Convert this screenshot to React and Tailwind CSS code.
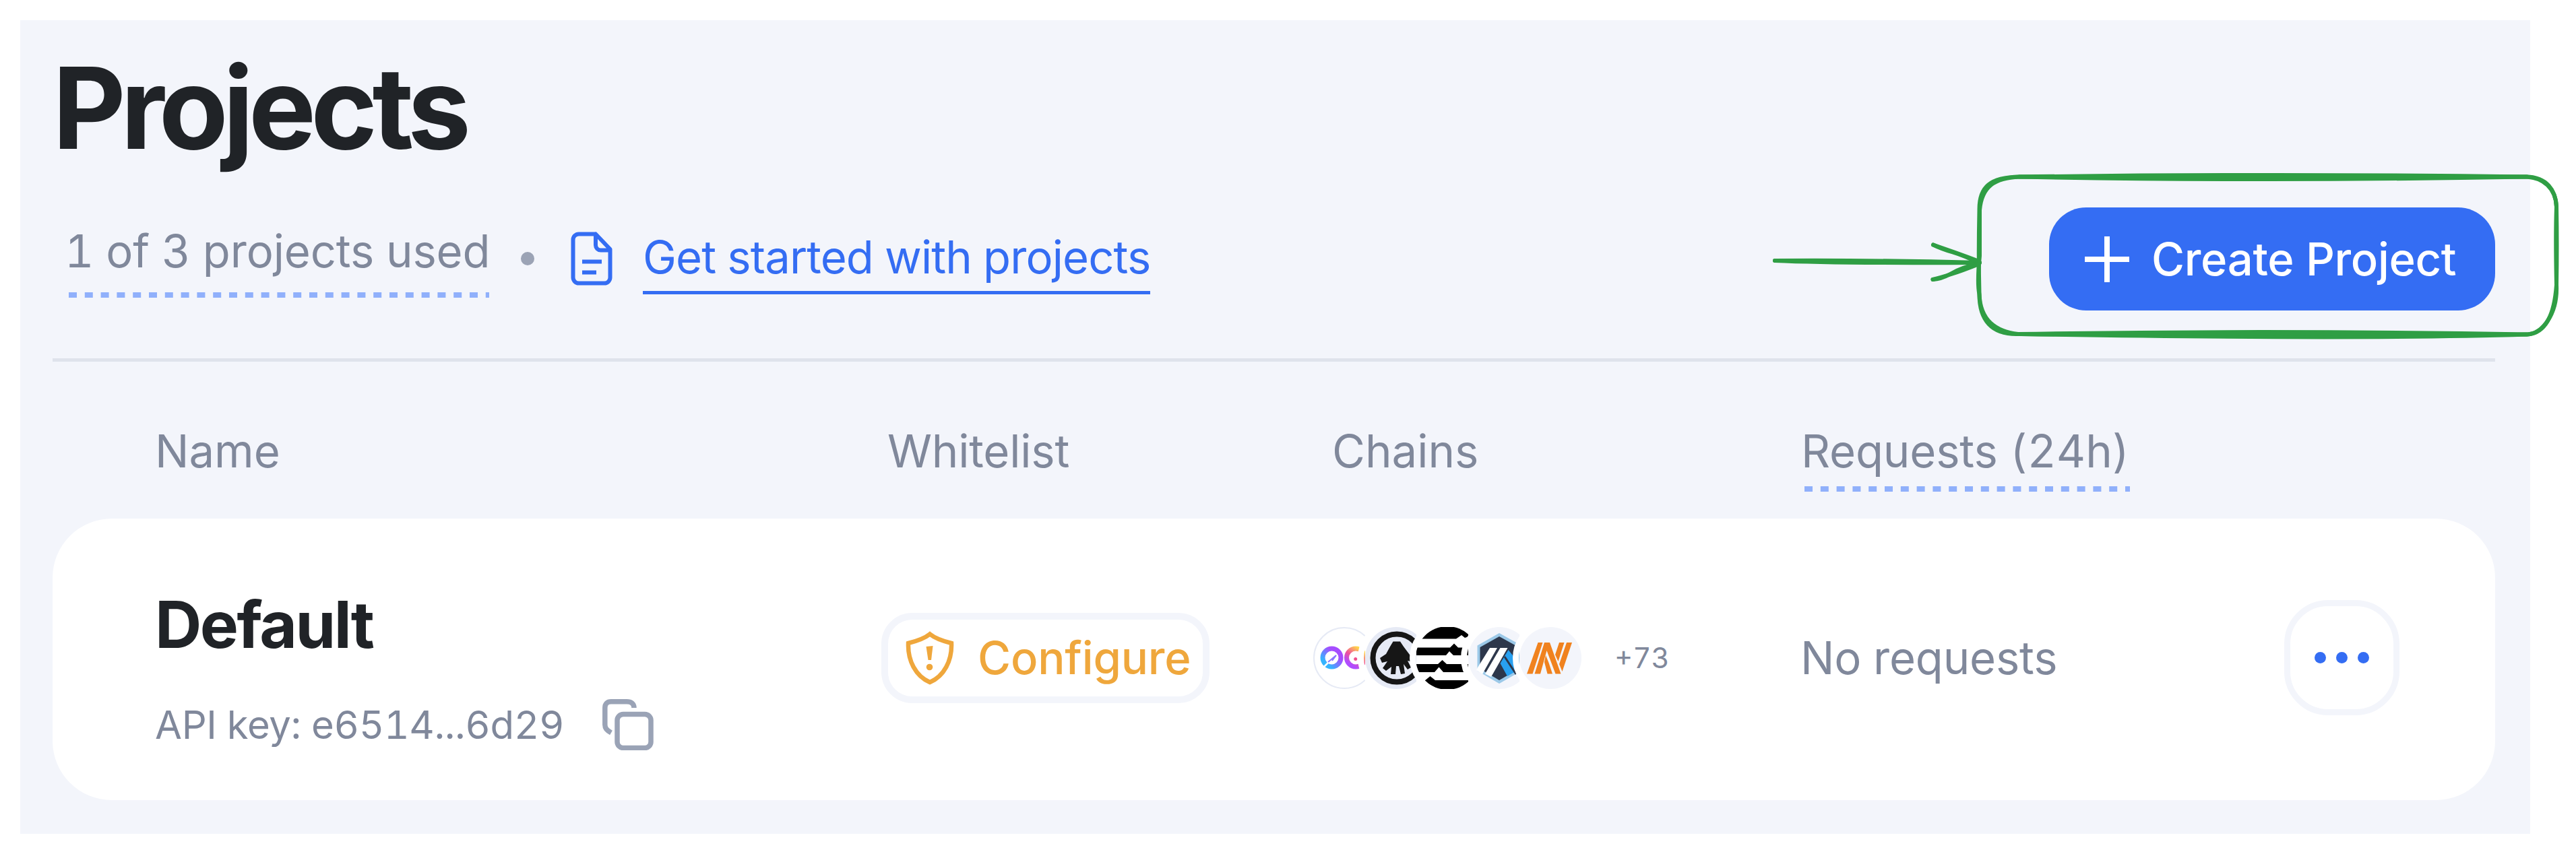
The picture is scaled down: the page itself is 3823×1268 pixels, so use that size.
import React from "react";

function DashLine() {
  return (
    <svg className="block w-full" height="8">
      <line x1="0" y1="4" x2="100%" y2="4" stroke="#90b0fb" strokeWidth="8" strokeDasharray="12 11.8" />
    </svg>
  );
}

function DocIcon() {
  return (
    <svg className="block" width="62" height="80" viewBox="0 0 62 80" fill="none" stroke="#346df3" strokeWidth="6" strokeLinejoin="round">
      <path d="M37 3.500H12A8.500 8.500 0 0 0 3.500 12V68A8.500 8.500 0 0 0 12 76.500H50A8.500 8.500 0 0 0 58.500 68V26L37 3.500V20a7.500 7.500 0 0 0 7.500 7.500H58" />
      <path d="M17 44.500H46M17 60.500H38" />
    </svg>
  );
}

function CopyIcon() {
  return (
    <svg className="block" width="76" height="76" viewBox="0 0 76 76" fill="none" stroke="#9aa3b6" strokeWidth="7.500">
      <rect x="22" y="22.500" width="50" height="50" rx="9" />
      <path d="M13 50C6 46 3.800 43 3.800 38V13C3.800 7 7 3.800 13 3.800H36C43 3.800 47 7 47 13" />
    </svg>
  );
}

function ShieldIcon() {
  return (
    <svg className="block" width="72" height="80" viewBox="0 0 72 80" fill="none">
      <path d="M36 4.500C28 11 16 15 4 18C3 44 15 67 36 76C57 67 69 44 68 18C56 15 44 11 36 4.500Z" stroke="#efa73c" strokeWidth="6.500" />
      <path d="M30.500 23L40.500 22L38 43H33.500Z" fill="#efa73c" />
      <circle cx="35.500" cy="53.500" r="4.800" fill="#efa73c" />
    </svg>
  );
}

function PlusIcon() {
  return (
    <svg className="block" width="66" height="68" viewBox="0 0 66 68" stroke="#fff" strokeWidth="8">
      <path d="M0 34H66M33 0V68" />
    </svg>
  );
}

/* One chain badge; all but the last are cut on the right by the ring of the next one. */
function Badge({ last, children }) {
  return (
    <svg className="block shrink-0" width={last ? 92 : 76.5} height="92" viewBox={last ? "0 0 92 92" : "0 0 76.5 92"}>
      {children}
      {last ? null : <circle cx="122.500" cy="46" r="52" fill="none" stroke="#fff" strokeWidth="9" />}
    </svg>
  );
}

function Chains() {
  return (
    <div className="flex">
      <Badge>
        <defs>
          <linearGradient id="ringA" x1="0" y1="1" x2="1" y2="0">
            <stop offset="0.200" stopColor="#35b4ff" />
            <stop offset="0.700" stopColor="#a64dff" />
          </linearGradient>
          <linearGradient id="ringB" x1="0" y1="1" x2="0.700" y2="0">
            <stop offset="0.200" stopColor="#b04dff" />
            <stop offset="0.550" stopColor="#f0509c" />
            <stop offset="1" stopColor="#ffd54a" />
          </linearGradient>
        </defs>
        <circle cx="46" cy="46" r="45" fill="#fff" stroke="#e6eaf5" strokeWidth="2" />
        <circle cx="27.500" cy="45.500" r="13.500" fill="none" stroke="url(#ringA)" strokeWidth="7" />
        <path d="M14 61L24 51" stroke="#fff" strokeWidth="2.500" />
        <path d="M22 52L34 42L28 50" fill="none" stroke="#8a74ff" strokeWidth="2" />
        <circle cx="63" cy="45.500" r="13.500" fill="none" stroke="url(#ringB)" strokeWidth="7" />
        <circle cx="62.700" cy="47.500" r="2.500" fill="#f0508c" />
      </Badge>
      <Badge>
        <circle cx="46" cy="46" r="46" fill="#e6eaf5" />
        <circle cx="47" cy="46" r="35.500" fill="none" stroke="#161616" strokeWidth="8" />
        <path
          d="M41.500 21.500H52L57 29L66 41L71 47L67 51L63 50L68 60L63 63L57 55L59 69L53 70L50 58H46L45 70L38 70L39 59L31 65L26 61L33 51L25 53L22 46L31 40L37 29Z"
          fill="#161616"
        />
      </Badge>
      <Badge>
        <circle cx="46" cy="46" r="47" fill="#000" />
        <path d="M0 17.500H59L67 12L72 16L78 14V30.500H62L56 24.500L50 30.500H0Z" fill="#fff" />
        <path d="M0 42H44L49 36L55 42H78V55H45L38.500 49L32 55H0Z" fill="#fff" />
        <path d="M0 67H27L33.500 59.500L40 67H78V79H28L20.500 73L12 80H0Z" fill="#fff" />
      </Badge>
      <Badge>
        <circle cx="46" cy="46" r="46" fill="#f3f5fb" />
        <path d="M46 9L79 27.500V65L46 84L13.500 65V27.500Z" fill="#9cc9e8" />
        <path d="M46 14L75 30V62L46 79L17.500 62V30Z" fill="#2d374b" />
        <path d="M59.500 34L66 42L78 62L70 66L58 73L47.500 54Z" fill="#28a0f0" />
        <path d="M54 44L71 70" stroke="#2d374b" strokeWidth="3" />
        <path d="M32 31H43L21 70L12 64L14 60Z" fill="#fff" />
        <path d="M47.500 31H58.500L34 74L25 69.500Z" fill="#fff" />
      </Badge>
      <Badge last>
        <circle cx="46" cy="46" r="46" fill="#f3f5fb" />
        <g fill="#f0821e">
          <path d="M27.500 23H34.500L19.500 69.500H11Z" />
          <path d="M37 23H45L61.500 69.500H53.500L40.500 35L31 69.500H22.500Z" />
          <path d="M39 42L43.500 53L49 69.500H41.500L37 52Z" />
          <path d="M59 23H66.500L57.500 51L53 41Z" />
          <path d="M70 23H78L63.500 66L59 55Z" />
        </g>
      </Badge>
    </div>
  );
}

function Annotation() {
  return (
    <svg
      className="pointer-events-none absolute top-[240px] left-[2620px]"
      width="1203"
      height="280"
      viewBox="2620 240 1203 280"
      fill="none"
      stroke="#2f9e44"
      strokeWidth="6"
      strokeLinecap="round"
      strokeLinejoin="round"
    >
      <path d="M2634 387Q2780 386 2938 390" />
      <path d="M2634 387Q2720 391 2938 390" />
      <path d="M2869 363.500Q2880 369 2898 374.500T2937 390.500" />
      <path d="M2869 363.500Q2885 369 2902 375T2937 388" />
      <path d="M2868.500 415Q2880 415 2896 406T2937 391" />
      <path d="M2868.500 415Q2880 412 2896 407T2937 392" />
      <path d="M2997 262.500H3750C3779 263 3793 282 3794 307Q3792.500 350 3794 423C3791 466 3778 494 3752 496.500Q3400 499 2995 496C2956 497 2937 476 2937.500 435Q2936 380 2937.500 312C2937 277 2954 263 2997 262.500Z" />
      <path d="M2997 262.500Q3380 257.500 3750 262.500C3774 264 3793 279 3794 307Q3795 365 3794 423C3796 466 3773 496 3750 496.500Q3370 490 2995 496C2962 492 2939 476 2937.500 437Q2934 420 2938 380V312C2941 277 2960 264 2997 262.500Z" />
      <path d="M2997 262.500Q3360 269.500 3750 262.500" />
      <path d="M3000 496Q3500 504.500 3750 496.500" />
      <path d="M3080 262.500H3640M3100 495.500Q3400 496 3690 496" />
    </svg>
  );
}

export default function App() {
  return (
    <div className="relative h-[1268px] w-[3823px] overflow-hidden bg-white p-[30px] font-['Inter',sans-serif] text-[67px] leading-[80px] whitespace-nowrap text-[#80889b] tabular-nums">
      <main className="flex h-[1208px] w-[3725px] flex-col bg-[#f3f5fb] pr-[52px] pl-[48px]">
        <h1 className="pt-[28px] text-[168px] leading-[204px] font-bold tracking-[-7.7px] text-[#202327]">Projects</h1>

        <header className="flex h-[275px] items-start border-b-[5px] border-[#dfe3ec]">
          <div className="mt-[71px] ml-6 w-[624px]">
            <div className="-ml-[6px] tracking-[-0.15px]">1 of 3 projects used</div>
            <div className="mt-[21px]">
              <DashLine />
            </div>
          </div>
          <div className="mt-[112px] ml-[47px] size-5 rounded-full bg-[#9ba3b5]" />
          <div className="mt-[82px] ml-[54px]">
            <DocIcon />
          </div>
          <a className="mt-[80px] ml-[45px] h-[95px] w-[753px] border-b-[5px] border-[#346df3] tracking-[-0.9px] text-[#346df3]">
            Get started with projects
          </a>
          <button className="mt-[46px] ml-auto flex h-[153px] w-[662px] items-center rounded-[55px] bg-[#346df3] pl-[53px] font-medium tracking-[-0.35px] text-white">
            <PlusIcon />
            <span className="ml-[33px]">Create Project</span>
          </button>
        </header>

        <div className="grid h-[233px] grid-cols-[1087px_660px_696px_1fr] items-start pt-[93px] pl-[152px]">
          <span>Name</span>
          <span className="tracking-[-0.2px]">Whitelist</span>
          <span>Chains</span>
          <div className="w-[490px]">
            <div className="tracking-[-0.15px]">Requests (24h)</div>
            <div className="mt-[12px] ml-[5px] w-[483px]">
              <DashLine />
            </div>
          </div>
        </div>

        <section className="grid h-[418px] grid-cols-[1078px_641px_722px_719px_170px] items-center rounded-[88px] bg-white pb-[5px] pl-[152px]">
          <div className="pt-[30px]">
            <div className="text-[96px] leading-[116px] font-bold tracking-[-2.5px] text-[#202327]">Default</div>
            <div className="mt-[53px] flex h-[76px] items-center">
              <span className="text-[58px] leading-[70px] tracking-[-0.35px]">API key: e6514...6d29</span>
              <div className="ml-[57px]">
                <CopyIcon />
              </div>
            </div>
          </div>
          <div>
            <button className="flex h-[134px] w-[487px] items-center rounded-[46px] border-[10px] border-[#f3f5fb] pl-[26px] font-medium tracking-[-0.2px] text-[#efa73c]">
              <ShieldIcon />
              <span className="ml-[35px]">Configure</span>
            </button>
          </div>
          <div className="flex items-center">
            <Chains />
            <span className="ml-[49px] text-[42px] leading-[50px]">+73</span>
          </div>
          <span className="pl-[1px] tracking-[-0.2px]">No requests</span>
          <button className="flex size-[171px] items-center justify-center gap-[15px] rounded-[65px] border-[9px] border-[#f3f5fb]">
            <span className="size-[17px] rounded-full bg-[#346df3]" />
            <span className="size-[17px] rounded-full bg-[#346df3]" />
            <span className="size-[17px] rounded-full bg-[#346df3]" />
          </button>
        </section>
      </main>
      <Annotation />
    </div>
  );
}
